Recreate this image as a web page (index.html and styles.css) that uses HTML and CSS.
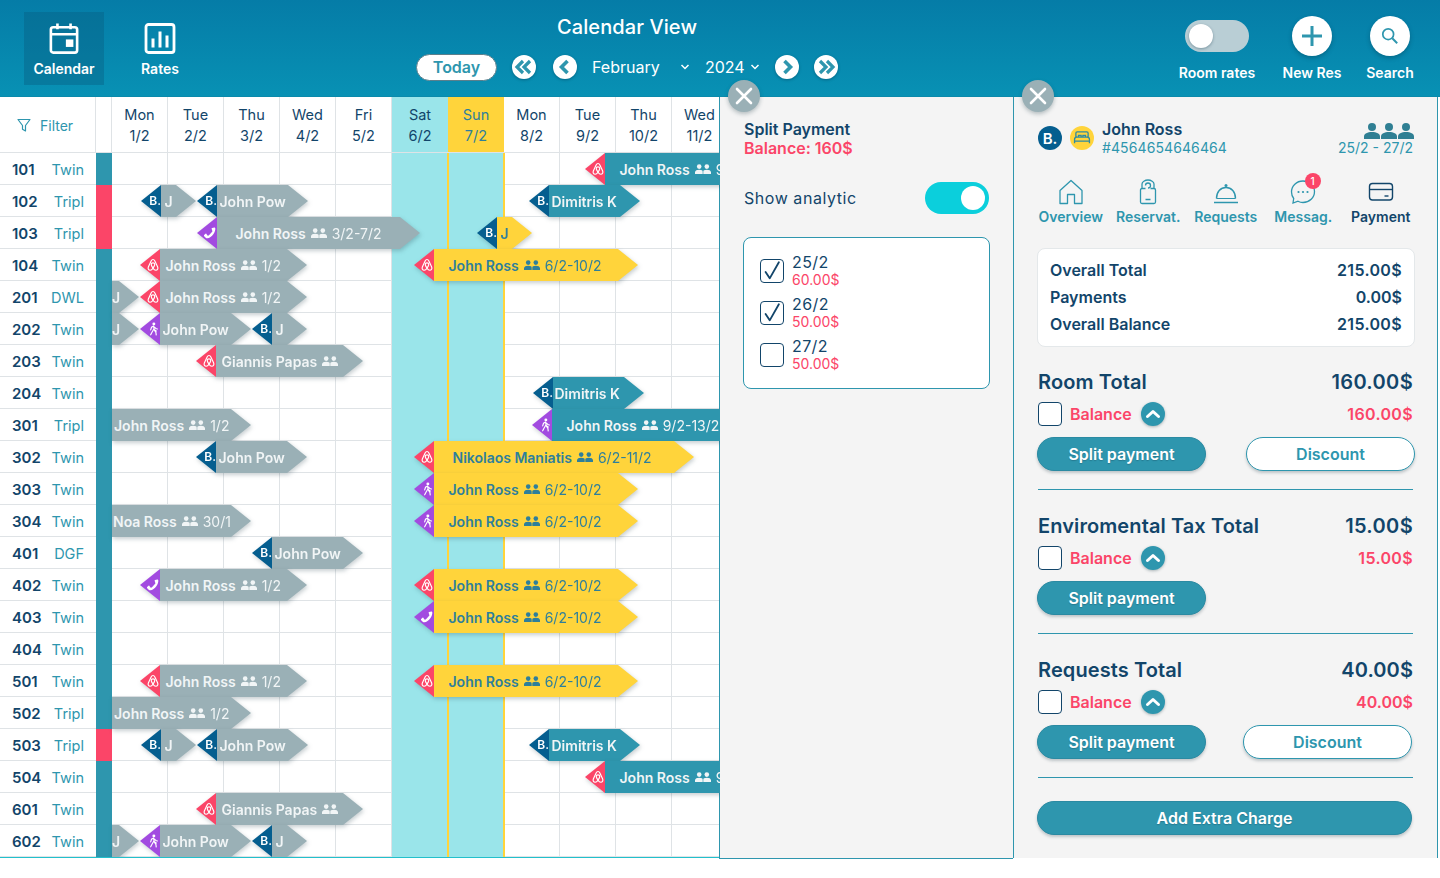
FILE: index.html
```html
<!DOCTYPE html>
<html lang="en">
<head>
<meta charset="utf-8">
<title>Calendar View</title>
<link rel="stylesheet" href="styles.css">
</head>
<body>
<svg class="defs" width="0" height="0" aria-hidden="true">
  <symbol id="air" viewBox="0 0 24 24"><g fill="none" stroke="currentColor" stroke-width="2"><path d="M12 2.500c-1.600 0-2.500 1-3.200 2.500L4 15.500c-1.100 2.700.4 5.500 3.200 5.500 1.900 0 3.400-1.300 4.800-3.500 1.400 2.200 2.900 3.500 4.800 3.500 2.800 0 4.300-2.800 3.200-5.500L15.200 5c-.7-1.500-1.600-2.500-3.200-2.500z"/><path d="M12 17.500c-1.800-2.500-3-4.500-3-6.300 0-1.700 1.300-2.900 3-2.900s3 1.200 3 2.900c0 1.800-1.200 3.800-3 6.300z"/></g></symbol>
  <symbol id="walk" viewBox="0 0 24 24"><circle cx="13.500" cy="3.500" r="2.500" fill="currentColor"/><path d="M13 7l-3.500 2-1.500 4.500M13 7l1 6 3.500 2.500M13.500 12l-3 5-2.500 5M14.500 14l2.500 4 .5 4M14 8.500l3 2.500 2.500 1" fill="none" stroke="currentColor" stroke-width="2" stroke-linecap="round"/></symbol>
  <symbol id="phone" viewBox="0 0 24 24"><path fill="currentColor" d="M19.500 2.500l-4 .8c-.6.1-.9.700-.7 1.300l1.300 4.200c.1.400-.1.800-.4 1-1 .700-2 2.400-3.300 3.900-1.100 1.300-2.700 2.700-3.600 3-.4.100-.8 0-1-.4L5.800 13.500c-.3-.5-.9-.6-1.400-.3l-2.500 2.300c-.4.400-.5 1-.1 1.500 1.200 2 3.200 4 5.700 4 3.500 0 7.500-3 10.500-7.300 2.300-3.300 3.500-6.700 3-10.200-.1-.600-.8-1.200-1.500-1z"/></symbol>
  <symbol id="ppl" viewBox="0 0 16 10"><g fill="currentColor"><circle cx="4.200" cy="2.600" r="2.300"/><circle cx="11.800" cy="2.600" r="2.300"/><path d="M0 10V8.200C0 6.500 2 5.700 4.200 5.700c1 0 2 .2 2.800.6.400.2.700.5.700 1.900V10zM16 10V8.200c0-1.700-2-2.500-4.200-2.500-1 0-2 .2-2.800.6-.4.2-.700.5-.700 1.900V10z"/></g></symbol>
  <symbol id="person" viewBox="0 0 16 16"><circle cx="8" cy="4" r="4" fill="currentColor"/><path fill="currentColor" d="M0 16v-2.500C0 10.500 3.500 9 8 9s8 1.500 8 4.500V16z"/></symbol>
  <symbol id="up" viewBox="0 0 24 24"><path d="M6.500 14.500L12 9.500l5.500 5" fill="none" stroke="currentColor" stroke-width="3" stroke-linecap="round" stroke-linejoin="round"/></symbol>
  <symbol id="check" viewBox="0 0 24 24"><path d="M5 13l4.500 7L19.500 2.500" fill="none" stroke="currentColor" stroke-width="2" stroke-linecap="round" stroke-linejoin="round"/></symbol>
  <symbol id="close" viewBox="0 0 32 32"><path d="M9 9l14 14M23 9L9 23" fill="none" stroke="currentColor" stroke-width="2.600" stroke-linecap="round"/></symbol>
</svg>

<header class="topbar">
  <nav class="nav">
    <a class="nav-item active">
      <svg viewBox="0 0 32 34" width="30" height="33"><g fill="none" stroke="#fff" stroke-width="2.800"><rect x="2" y="5" width="28" height="27" rx="2.500"/><path d="M2 12.500h28M9 1v6M23 1v6"/></g><rect x="18" y="18" width="8" height="8" fill="#fff"/></svg>
      <span>Calendar</span>
    </a>
    <a class="nav-item">
      <svg viewBox="0 0 32 32" width="32" height="33"><rect x="2" y="2" width="28" height="28" rx="2.500" fill="none" stroke="#fff" stroke-width="2.800"/><path d="M9 16v9M16 9v16M23 13v12" stroke="#fff" stroke-width="3" fill="none"/></svg>
      <span>Rates</span>
    </a>
  </nav>
  <div class="center">
    <h1>Calendar View</h1>
    <div class="controls">
      <button class="today">Today</button>
      <span class="circ c1"><svg viewBox="0 0 24 24"><path d="M11 6l-6 6 6 6M18 6l-6 6 6 6" fill="none" stroke="currentColor" stroke-width="3.200"/></svg></span>
      <span class="circ c2"><svg viewBox="0 0 24 24"><path d="M14.500 6l-6 6 6 6" fill="none" stroke="currentColor" stroke-width="3.600"/></svg></span>
      <span class="month">February</span>
      <svg class="caret" viewBox="0 0 10 6"><path d="M1.500 1l3.500 3.500L8.500 1" fill="none" stroke="#fff" stroke-width="1.500"/></svg>
      <span class="year">2024</span>
      <svg class="caret c3" viewBox="0 0 10 6"><path d="M1.500 1l3.500 3.500L8.500 1" fill="none" stroke="#fff" stroke-width="1.500"/></svg>
      <span class="circ c4"><svg viewBox="0 0 24 24"><path d="M9.500 6l6 6-6 6" fill="none" stroke="currentColor" stroke-width="3.600"/></svg></span>
      <span class="circ c5"><svg viewBox="0 0 24 24"><path d="M6 6l6 6-6 6M13 6l6 6-6 6" fill="none" stroke="currentColor" stroke-width="3.200"/></svg></span>
    </div>
  </div>
  <div class="tools">
    <div class="tool t-rates"><span class="switch"><i></i></span><span class="tool-label">Room rates</span></div>
    <div class="tool t-new"><span class="big-circ"><svg viewBox="0 0 24 24" width="24" height="24"><path d="M12 2v20M2 12h20" stroke="#2e96ae" stroke-width="3" fill="none"/></svg></span><span class="tool-label">New Res</span></div>
    <div class="tool t-search"><span class="big-circ"><svg viewBox="0 0 20 20" width="18" height="18"><circle cx="8" cy="8" r="6" fill="none" stroke="#2e96ae" stroke-width="1.900"/><path d="M12.500 12.500L18 18" stroke="#2e96ae" stroke-width="2.200"/></svg></span><span class="tool-label">Search</span></div>
  </div>
</header>

<main class="main">
  <section class="calendar">
    <div class="cal-head">
      <div class="filter"><svg viewBox="0 0 14 14" width="14" height="14"><path d="M1 1.500h12L8.500 7.500v5.500l-3-1.800V7.500z" fill="none" stroke="#2e96ae" stroke-width="1.200" stroke-linejoin="round"/></svg><span>Filter</span></div>
      <div class="stat-head"></div>
      <div class="day">Mon<br>1/2</div><div class="day">Tue<br>2/2</div><div class="day">Thu<br>3/2</div><div class="day">Wed<br>4/2</div><div class="day">Fri<br>5/2</div><div class="day sat">Sat<br>6/2</div><div class="day sun">Sun<br>7/2</div><div class="day">Mon<br>8/2</div><div class="day">Tue<br>9/2</div><div class="day">Thu<br>10/2</div><div class="day">Wed<br>11/2</div>
    </div>

    <div class="row"><b>101</b><em>Twin</em><i class="st"></i><div class="tl">
      <div class="bar" style="left:473px;width:200px"><span class="tag pink"><svg><use href="#air"/></svg></span><span class="body teal p15"><strong>John Ross</strong><svg class="pp"><use href="#ppl"/></svg>9/2-13/2</span></div>
    </div></div>
    <div class="row"><b>102</b><em>Tripl</em><i class="st red"></i><div class="tl">
      <div class="bar" style="left:29px;width:55px"><span class="tag blue">B.</span><span class="body gray p4"><strong>J</strong></span></div>
      <div class="bar" style="left:85px;width:111px"><span class="tag blue">B.</span><span class="body gray p3"><strong>John Pow</strong></span></div>
      <div class="bar" style="left:417px;width:111px"><span class="tag blue">B.</span><span class="body teal p3"><strong>Dimitris K</strong></span></div>
    </div></div>
    <div class="row"><b>103</b><em>Tripl</em><i class="st red"></i><div class="tl">
      <div class="bar" style="left:85px;width:223px"><span class="tag purple"><svg><use href="#phone"/></svg></span><span class="body gray p19"><strong>John Ross</strong><svg class="pp"><use href="#ppl"/></svg>3/2-7/2</span></div>
      <div class="bar" style="left:365px;width:55px"><span class="tag blue">B.</span><span class="body yellow p4"><strong>J</strong></span></div>
    </div></div>
    <div class="row"><b>104</b><em>Twin</em><i class="st"></i><div class="tl">
      <div class="bar" style="left:28px;width:167px"><span class="tag pink"><svg><use href="#air"/></svg></span><span class="body gray p6"><strong>John Ross</strong><svg class="pp"><use href="#ppl"/></svg>1/2</span></div>
      <div class="bar" style="left:302px;width:224px"><span class="tag pink"><svg><use href="#air"/></svg></span><span class="body yellow p15"><strong>John Ross</strong><svg class="pp"><use href="#ppl"/></svg>6/2-10/2</span></div>
    </div></div>
    <div class="row"><b>201</b><em>DWL</em><i class="st"></i><div class="tl">
      <div class="bar" style="left:0;width:27px"><span class="body gray p0"><strong>J</strong></span></div>
      <div class="bar" style="left:28px;width:167px"><span class="tag pink"><svg><use href="#air"/></svg></span><span class="body gray p6"><strong>John Ross</strong><svg class="pp"><use href="#ppl"/></svg>1/2</span></div>
    </div></div>
    <div class="row"><b>202</b><em>Twin</em><i class="st"></i><div class="tl">
      <div class="bar" style="left:0;width:27px"><span class="body gray p0"><strong>J</strong></span></div>
      <div class="bar" style="left:28px;width:111px"><span class="tag purple"><svg><use href="#walk"/></svg></span><span class="body gray p3"><strong>John Pow</strong></span></div>
      <div class="bar" style="left:140px;width:55px"><span class="tag blue">B.</span><span class="body gray p4"><strong>J</strong></span></div>
    </div></div>
    <div class="row"><b>203</b><em>Twin</em><i class="st"></i><div class="tl">
      <div class="bar" style="left:84px;width:167px"><span class="tag pink"><svg><use href="#air"/></svg></span><span class="body gray p6"><strong>Giannis Papas</strong><svg class="pp"><use href="#ppl"/></svg></span></div>
    </div></div>
    <div class="row"><b>204</b><em>Twin</em><i class="st"></i><div class="tl">
      <div class="bar" style="left:421px;width:111px"><span class="tag blue">B.</span><span class="body teal p2"><strong>Dimitris K</strong></span></div>
    </div></div>
    <div class="row"><b>301</b><em>Tripl</em><i class="st"></i><div class="tl">
      <div class="bar" style="left:0;width:139px"><span class="body gray p2"><strong>John Ross</strong><svg class="pp"><use href="#ppl"/></svg>1/2</span></div>
      <div class="bar" style="left:420px;width:260px"><span class="tag purple"><svg><use href="#walk"/></svg></span><span class="body teal p15"><strong>John Ross</strong><svg class="pp"><use href="#ppl"/></svg>9/2-13/2</span></div>
    </div></div>
    <div class="row"><b>302</b><em>Twin</em><i class="st"></i><div class="tl">
      <div class="bar" style="left:84px;width:111px"><span class="tag blue">B.</span><span class="body gray p3"><strong>John Pow</strong></span></div>
      <div class="bar" style="left:302px;width:280px"><span class="tag pink"><svg><use href="#air"/></svg></span><span class="body yellow p19"><strong>Nikolaos Maniatis</strong><svg class="pp"><use href="#ppl"/></svg>6/2-11/2</span></div>
    </div></div>
    <div class="row"><b>303</b><em>Twin</em><i class="st"></i><div class="tl">
      <div class="bar" style="left:302px;width:224px"><span class="tag purple"><svg><use href="#walk"/></svg></span><span class="body yellow p15"><strong>John Ross</strong><svg class="pp"><use href="#ppl"/></svg>6/2-10/2</span></div>
    </div></div>
    <div class="row"><b>304</b><em>Twin</em><i class="st"></i><div class="tl">
      <div class="bar" style="left:0;width:139px"><span class="body gray p1"><strong>Noa Ross</strong><svg class="pp"><use href="#ppl"/></svg>30/1</span></div>
      <div class="bar" style="left:302px;width:224px"><span class="tag purple"><svg><use href="#walk"/></svg></span><span class="body yellow p15"><strong>John Ross</strong><svg class="pp"><use href="#ppl"/></svg>6/2-10/2</span></div>
    </div></div>
    <div class="row"><b>401</b><em>DGF</em><i class="st"></i><div class="tl">
      <div class="bar" style="left:140px;width:111px"><span class="tag blue">B.</span><span class="body gray p3"><strong>John Pow</strong></span></div>
    </div></div>
    <div class="row"><b>402</b><em>Twin</em><i class="st"></i><div class="tl">
      <div class="bar" style="left:28px;width:167px"><span class="tag purple"><svg><use href="#phone"/></svg></span><span class="body gray p6"><strong>John Ross</strong><svg class="pp"><use href="#ppl"/></svg>1/2</span></div>
      <div class="bar" style="left:302px;width:224px"><span class="tag pink"><svg><use href="#air"/></svg></span><span class="body yellow p15"><strong>John Ross</strong><svg class="pp"><use href="#ppl"/></svg>6/2-10/2</span></div>
    </div></div>
    <div class="row"><b>403</b><em>Twin</em><i class="st"></i><div class="tl">
      <div class="bar" style="left:302px;width:224px"><span class="tag purple"><svg><use href="#phone"/></svg></span><span class="body yellow p15"><strong>John Ross</strong><svg class="pp"><use href="#ppl"/></svg>6/2-10/2</span></div>
    </div></div>
    <div class="row"><b>404</b><em>Twin</em><i class="st"></i><div class="tl"></div></div>
    <div class="row"><b>501</b><em>Twin</em><i class="st"></i><div class="tl">
      <div class="bar" style="left:28px;width:167px"><span class="tag pink"><svg><use href="#air"/></svg></span><span class="body gray p6"><strong>John Ross</strong><svg class="pp"><use href="#ppl"/></svg>1/2</span></div>
      <div class="bar" style="left:302px;width:224px"><span class="tag pink"><svg><use href="#air"/></svg></span><span class="body yellow p15"><strong>John Ross</strong><svg class="pp"><use href="#ppl"/></svg>6/2-10/2</span></div>
    </div></div>
    <div class="row"><b>502</b><em>Tripl</em><i class="st"></i><div class="tl">
      <div class="bar" style="left:0;width:139px"><span class="body gray p2"><strong>John Ross</strong><svg class="pp"><use href="#ppl"/></svg>1/2</span></div>
    </div></div>
    <div class="row"><b>503</b><em>Tripl</em><i class="st red"></i><div class="tl">
      <div class="bar" style="left:29px;width:55px"><span class="tag blue">B.</span><span class="body gray p4"><strong>J</strong></span></div>
      <div class="bar" style="left:85px;width:111px"><span class="tag blue">B.</span><span class="body gray p3"><strong>John Pow</strong></span></div>
      <div class="bar" style="left:417px;width:111px"><span class="tag blue">B.</span><span class="body teal p3"><strong>Dimitris K</strong></span></div>
    </div></div>
    <div class="row"><b>504</b><em>Twin</em><i class="st"></i><div class="tl">
      <div class="bar" style="left:473px;width:200px"><span class="tag pink"><svg><use href="#air"/></svg></span><span class="body teal p15"><strong>John Ross</strong><svg class="pp"><use href="#ppl"/></svg>9/2-13/2</span></div>
    </div></div>
    <div class="row"><b>601</b><em>Twin</em><i class="st"></i><div class="tl">
      <div class="bar" style="left:84px;width:167px"><span class="tag pink"><svg><use href="#air"/></svg></span><span class="body gray p6"><strong>Giannis Papas</strong><svg class="pp"><use href="#ppl"/></svg></span></div>
    </div></div>
    <div class="row"><b>602</b><em>Twin</em><i class="st"></i><div class="tl">
      <div class="bar" style="left:0;width:27px"><span class="body gray p0"><strong>J</strong></span></div>
      <div class="bar" style="left:28px;width:111px"><span class="tag purple"><svg><use href="#walk"/></svg></span><span class="body gray p3"><strong>John Pow</strong></span></div>
      <div class="bar" style="left:140px;width:55px"><span class="tag blue">B.</span><span class="body gray p4"><strong>J</strong></span></div>
    </div></div>
  </section>

  <aside class="split">
    <span class="x"><svg><use href="#close"/></svg></span>
    <h2>Split Payment</h2>
    <p class="bal">Balance: 160$</p>
    <div class="analytic"><span>Show analytic</span><span class="switch on"><i></i></span></div>
    <div class="days">
      <div class="d-row"><span class="cb"><svg><use href="#check"/></svg></span><div><div class="d-date">25/2</div><div class="d-amt">60.00$</div></div></div>
      <div class="d-row"><span class="cb"><svg><use href="#check"/></svg></span><div><div class="d-date">26/2</div><div class="d-amt">50.00$</div></div></div>
      <div class="d-row"><span class="cb"></span><div><div class="d-date">27/2</div><div class="d-amt">50.00$</div></div></div>
    </div>
  </aside>

  <aside class="detail">
    <span class="x"><svg><use href="#close"/></svg></span>
    <div class="guest">
      <span class="badge bk">B.</span>
      <span class="badge bed"><svg viewBox="0 0 20 16" width="18" height="14"><path d="M3 7V2.500C3 1.700 3.700 1 4.500 1h11c.8 0 1.500.7 1.500 1.500V7M1.500 14v-4.500C1.500 8 2.500 7 4 7h12c1.500 0 2.500 1 2.500 2.500V14M1.500 11.500h17M6 7V5h3v2M11 7V5h3v2" fill="none" stroke="#2e8aa3" stroke-width="1.500"/></svg></span>
      <div class="g-name"><strong>John Ross</strong><span>#4564654646464</span></div>
      <div class="g-stay"><div class="persons"><svg><use href="#person"/></svg><svg><use href="#person"/></svg><svg><use href="#person"/></svg></div><span>25/2 - 27/2</span></div>
    </div>
    <div class="tabs">
      <div class="tab"><svg viewBox="0 0 26 26"><path d="M2 11.500L13 1.500l11 10V24.500h-7.500V15.500h-7V24.500H2z" fill="none" stroke="currentColor" stroke-width="1.300" stroke-linejoin="round"/></svg><span>Overview</span></div>
      <div class="tab"><svg viewBox="0 0 26 26"><path d="M7 9.500C6 9.500 5.500 10 5.500 11V23c0 1 .5 1.500 1.500 1.500h12c1 0 1.500-.5 1.500-1.500V11c0-1-.5-1.500-1.500-1.500V5C19 2.800 16 1 13 1S7 2.800 7 5v4.500zM7 9.500h3.500M15.500 9.500H19M10.500 6.500C10.500 5 11.500 4 13 4s2.500 1 2.500 2.500-1 2.500-2.500 2.500M10.500 20.500h5" fill="none" stroke="currentColor" stroke-width="1.300"/></svg><span>Reservat.</span></div>
      <div class="tab"><svg viewBox="0 0 26 26"><path d="M3.500 19.500C3.500 13 7.500 8.500 13 8.500s9.500 4.500 9.500 11M1 23.500h24" fill="none" stroke="currentColor" stroke-width="1.400"/><path d="M3.500 19.500h19" stroke="currentColor" stroke-width="1"/><circle cx="13" cy="6.500" r="1.500" fill="currentColor"/></svg><span>Requests</span></div>
      <div class="tab msg"><svg viewBox="0 0 26 26"><path d="M13 2C6.500 2 1.500 6.800 1.500 13c0 2.500.8 4.700 2.200 6.500L3 24l5-1.800c1.500.8 3.200 1.300 5 1.300 6.500 0 11.500-4.800 11.500-11S19.500 2 13 2z" fill="none" stroke="currentColor" stroke-width="1.300"/><circle cx="8.500" cy="13" r="1.100" fill="currentColor"/><circle cx="13" cy="13" r="1.100" fill="currentColor"/><circle cx="17.500" cy="13" r="1.100" fill="currentColor"/></svg><i class="pin">1</i><span>Messag.</span></div>
      <div class="tab current"><svg viewBox="0 0 26 26"><rect x="1.500" y="4.500" width="23" height="16.500" rx="3" fill="none" stroke="currentColor" stroke-width="1.400"/><path d="M1.500 10.500h23" stroke="currentColor" stroke-width="1.400"/><path d="M16.500 17h4" stroke="currentColor" stroke-width="1.400"/></svg><span>Payment</span></div>
    </div>
    <div class="summary">
      <div><span>Overall Total</span><span class="wide">215.00$</span></div>
      <div><span>Payments</span><span>0.00$</span></div>
      <div><span>Overall Balance</span><span class="wide">215.00$</span></div>
    </div>
    <section class="sec">
      <div class="s-title"><span>Room Total</span><span class="wide">160.00$</span></div>
      <div class="s-bal"><span class="cb"></span><span class="s-label">Balance</span><span class="mini"><svg><use href="#up"/></svg></span><span class="s-amt wide">160.00$</span></div>
      <div class="s-btns"><button class="btn">Split payment</button><button class="btn out">Discount</button></div>
    </section>
    <section class="sec">
      <div class="s-title"><span>Enviromental Tax Total</span><span class="wide">15.00$</span></div>
      <div class="s-bal"><span class="cb"></span><span class="s-label">Balance</span><span class="mini"><svg><use href="#up"/></svg></span><span class="s-amt wide">15.00$</span></div>
      <div class="s-btns"><button class="btn">Split payment</button></div>
    </section>
    <section class="sec">
      <div class="s-title"><span>Requests Total</span><span>40.00$</span></div>
      <div class="s-bal"><span class="cb"></span><span class="s-label">Balance</span><span class="mini"><svg><use href="#up"/></svg></span><span class="s-amt">40.00$</span></div>
      <div class="s-btns narrow"><button class="btn">Split payment</button><button class="btn out">Discount</button></div>
    </section>
    <button class="btn extra">Add Extra Charge</button>
  </aside>
</main>
</body>
</html>
```

FILE: styles.css
```css
* { box-sizing: border-box; }
html, body { margin: 0; height: 100%; background: #fff; overflow: hidden; }
body { font-family: Inter, "Liberation Sans", sans-serif; color: #12456a; }
.defs { position: absolute; }
h1, h2, p { margin: 0; font-weight: inherit; }
em, i { font-style: normal; }

/* top bar */
.topbar { height: 97px; display: flex; background: linear-gradient(#057ca7, #0891b4); color: #fff; border-bottom: 1px solid #0a8aab; }
.nav { display: flex; padding: 12px 0 0 24px; width: 300px; align-items: flex-start; }
.nav-item { width: 80px; height: 73px; display: flex; flex-direction: column; align-items: center; justify-content: flex-start; padding-top: 10px; gap: 5px; font-size: 14px; font-weight: 600; }
.nav-item span { line-height: 17px; }
.nav-item svg { display: block; flex: none; }
.nav-item.active { background: rgba(6, 96, 130, .42); }
.nav-item + .nav-item { margin-left: 16px; }
.center { width: 560px; position: relative; padding-top: 15px; }
.center h1 { font-size: 20px; line-height: 24px; font-weight: 500; letter-spacing: .1px; text-align: center; width: 654px; }
.controls { display: flex; align-items: center; height: 28px; margin-top: 14px; padding-left: 116px; }
.today { width: 81px; height: 27px; border-radius: 14px; border: 1px solid #5b7f8c; background: #fff; color: #2e96ae; font: 600 16px Inter, sans-serif; padding: 0; }
.circ { width: 24px; height: 24px; border-radius: 50%; background: #fff; color: #2e96ae; box-shadow: 0 1px 3px rgba(0, 50, 70, .4); display: block; flex: none; }
.circ svg { display: block; width: 24px; height: 24px; }
.c1 { margin-left: 15px; }
.c2 { margin-left: 17px; }
.month, .year { font-size: 16px; line-height: 24px; }
.month { margin-left: 15px; width: 88px; }
.caret { width: 10px; height: 6px; flex: none; margin-left: 0; }
.year { margin-left: 15px; width: 39px; }
.c3 { margin-left: 6px; }
.c4 { margin-left: 15px; }
.c5 { margin-left: 15px; }
.tools { flex: 1; position: relative; display: flex; padding-top: 16px; }
.tool { display: flex; flex-direction: column; align-items: center; }
.tool-label { font-size: 14px; font-weight: 600; line-height: 17px; margin-top: 8px; white-space: nowrap; }
.t-rates { width: 80px; margin-left: 317px; padding-top: 4px; }
.t-rates .tool-label { margin-top: 12px; }
.t-new { width: 62px; margin-left: 24px; }
.t-search { width: 54px; margin-left: 20px; }
.big-circ { width: 40px; height: 40px; border-radius: 50%; background: #fff; display: flex; align-items: center; justify-content: center; box-shadow: 0 2px 4px rgba(0, 50, 70, .35); }
.switch { width: 64px; height: 32px; border-radius: 16px; background: #b9ced5; display: block; position: relative; flex: none; }
.switch i { position: absolute; top: 4px; left: 4px; width: 24px; height: 24px; border-radius: 50%; background: #fff; box-shadow: 0 1px 3px rgba(0, 40, 60, .35); }
.switch.on { background: #0bcfdc; }
.switch.on i { left: 36px; box-shadow: none; }

/* calendar */
.main { display: flex; height: 781px; }
.calendar { width: 720px; height: 761px; overflow: hidden; border-bottom: 1px solid #22c0cc; flex: none; }
.cal-head { display: flex; height: 56px; border-bottom: 1px solid #dfe3e6; }
.filter { width: 96px; flex: none; display: flex; align-items: center; padding: 1px 0 0 17px; gap: 9px; font-size: 14px; color: #2e96ae; border-right: 1px solid #dfe3e6; }
.stat-head { width: 16px; flex: none; border-right: 1px solid #dfe3e6; }
.day { width: 56px; flex: none; text-align: center; font-size: 14.500px; line-height: 21px; padding-top: 7px; border-right: 1px solid #dfe3e6; }
.day.sat { background: #9ae5ea; border-right: 0; }
.day.sun { background: #ffd43b; color: #2e7f9b; border-right: 0; }
.row { display: flex; height: 32px; border-bottom: 1px solid #dfe3e6; align-items: center; font-size: 15px; position: relative; }
.row > b { width: 41px; padding-left: 12px; font-weight: 600; flex: none; margin-top: 1px; }
.row > em { width: 43px; text-align: right; color: #2e96ae; flex: none; font-size: 14.500px; margin-top: 1px; }
.st { width: 16px; height: 32px; background: #2e96ae; margin-left: 12px; flex: none; align-self: flex-start; }
.st.red { background: #fb4568; }
.tl { flex: 1; height: 32px; align-self: flex-start; position: relative;
  background:
    linear-gradient(90deg, transparent 335px, #ffd43b 335px, #ffd43b 337px, transparent 337px, transparent 391px, #ffd43b 391px, #ffd43b 393px, transparent 393px),
    linear-gradient(90deg, transparent 280px, #9ae5ea 280px, #9ae5ea 391px, transparent 391px),
    linear-gradient(90deg, transparent 55px, #dfe3e6 55px) 0 0 / 56px 100%;
}
.bar { position: absolute; top: 0; height: 32px; display: flex; filter: drop-shadow(1px 2px 2px rgba(30, 60, 70, .25)); z-index: 1; }
.tag { width: 20px; flex: none; display: flex; align-items: center; justify-content: flex-end; padding: 0 0 2px 0; color: #fff; font-size: 12px; font-weight: 600; clip-path: polygon(100% 0, 100% 100%, 0 50%); margin-right: -.500px; }
.tag svg { width: 14px; height: 14px; margin-bottom: -2px; }
.pink { background: #fb4568; }
.blue { background: #055e8f; }
.purple { background: #a24be0; }
.body { flex: 1; min-width: 0; display: flex; align-items: center; white-space: nowrap; font-size: 14px; font-weight: 400; color: #f1f5f6; clip-path: polygon(0 0, calc(100% - 20px) 0, 100% 50%, calc(100% - 20px) 100%, 0 100%); }
.body strong { font-weight: 600; }
.gray { background: #9ab0b6; }
.teal { background: #2e96ae; }
.yellow { background: #ffd43b; color: #2e7f9b; }
.p0 { padding-left: 0; } .p1 { padding-left: 1px; } .p2 { padding-left: 2px; } .p3 { padding-left: 3px; } .p4 { padding-left: 4px; } .p6 { padding-left: 6px; } .p15 { padding-left: 15px; } .p19 { padding-left: 19px; }
.pp { width: 16px; height: 10px; margin: 0 5px; flex: none; }

/* split panel */
.split, .detail { background: #f4f4f4; border-left: 1px solid #2e96ae; position: relative; flex: none; }
.split { width: 294px; height: 762px; margin-left: -1px; padding: 23px 24px 0; border-bottom: 1px solid #2e96ae; }
.x { position: absolute; top: -17px; left: 8px; width: 32px; height: 32px; border-radius: 50%; background: #9ab0b6; color: #fff; box-shadow: 0 2px 4px rgba(30, 60, 70, .3); z-index: 3; }
.x svg { display: block; width: 32px; height: 32px; }
.split h2 { font-size: 16px; line-height: 19px; font-weight: 600; }
.bal { font-size: 16px; line-height: 19px; font-weight: 600; color: #fb4568; }
.analytic { display: flex; justify-content: space-between; align-items: center; margin-top: 24px; width: 245px; font-size: 16px; letter-spacing: .55px; }
.days { width: 247px; height: 152px; margin: 23px 0 0 -1px; background: #fff; border: 1px solid #2e96ae; border-radius: 8px; padding: 12px 16px; }
.d-row { display: flex; align-items: center; gap: 8px; height: 42px; }
.cb { width: 24px; height: 24px; border: 1px solid #12456a; border-radius: 4px; background: #fff; display: block; flex: none; }
.cb svg { display: block; width: 22px; height: 22px; color: #12456a; }
.d-date { font-size: 16px; line-height: 18px; letter-spacing: .4px; }
.d-amt { font-size: 14px; line-height: 18px; color: #fb4568; }

/* detail panel */
.detail { width: 425px; height: 761px; padding: 0 24px; border-right: 1px solid #2e96ae; }
.guest { display: flex; align-items: center; height: 38px; position: relative; top: 22px; gap: 8px; }
.badge { width: 24px; height: 24px; border-radius: 50%; display: flex; align-items: center; justify-content: center; flex: none; }
.bk { background: #055e8f; color: #fff; font-size: 15px; font-weight: 600; }
.bed { background: #ffd43b; }
.g-name { display: flex; flex-direction: column; line-height: 18px; }
.g-name strong { font-size: 16px; font-weight: 600; }
.g-name span { font-size: 14px; color: #2e96ae; letter-spacing: .1px; padding-top: 1px; }
.g-stay { margin-left: auto; padding-top: 4px; display: flex; flex-direction: column; align-items: flex-end; font-size: 14px; color: #2e96ae; line-height: 18px; }
.persons { display: flex; gap: 1px; color: #2f7f93; height: 16px; margin-right: -1px; }
.persons svg { width: 16px; height: 16px; }
.tabs { display: grid; grid-template-columns: repeat(5, 77.500px); margin: 0 -6px; position: relative; top: 44px; height: 56px; }
.tab { display: flex; flex-direction: column; align-items: center; gap: 3px; font-size: 14px; font-weight: 600; color: #2e96ae; position: relative; white-space: nowrap; }
.tab svg { width: 26px; height: 26px; display: block; }
.tab span { line-height: 17px; }
.tab.current { color: #12456a; }
.pin { position: absolute; top: -6px; left: 40px; width: 16px; height: 16px; border-radius: 50%; background: #fb4568; color: #fff; font-size: 10px; line-height: 16px; text-align: center; font-weight: 500; }
.summary { position: absolute; top: 151px; left: 23px; width: 378px; height: 99px; background: #fff; border: 1px solid #e4e8ea; border-radius: 8px; padding: 7px 12px; font-size: 16px; font-weight: 600; }
.summary div { display: flex; justify-content: space-between; height: 27px; align-items: center; }
.wide { letter-spacing: .35px; }
.sec { position: relative; top: 179px; height: 120px; margin-bottom: 24px; border-bottom: 1px solid #2e96ae; }
.s-title { display: flex; justify-content: space-between; font-size: 20px; font-weight: 600; letter-spacing: .1px; line-height: 24px; }
.s-bal { display: flex; align-items: center; margin-top: 8px; height: 24px; font-size: 16px; font-weight: 600; color: #fb4568; }
.s-label { margin-left: 8px; }
.mini { width: 24px; height: 24px; border-radius: 50%; background: #2e96ae; color: #fff; margin-left: 9px; box-shadow: 0 1px 3px rgba(30, 60, 70, .35); }
.mini svg { display: block; width: 24px; height: 24px; }
.s-amt { margin-left: auto; }
.s-btns { display: flex; justify-content: space-between; margin: 11px 0 0 -1px; width: 378px; }
.s-btns.narrow { width: 375px; }
.btn { width: 169px; height: 34px; border-radius: 17px; border: 1px solid #2b8aa2; background: #2e96ae; color: #fff; font: 600 16px Inter, sans-serif; padding: 0; box-shadow: 0 2px 3px rgba(30, 60, 70, .25); text-shadow: 0 1px 1px rgba(20, 60, 75, .3); display: block; }
.btn.out { background: #fff; color: #2e96ae; border-color: #2e96ae; text-shadow: none; }
.btn.extra { position: absolute; top: 704px; left: 23px; width: 375px; }
```
